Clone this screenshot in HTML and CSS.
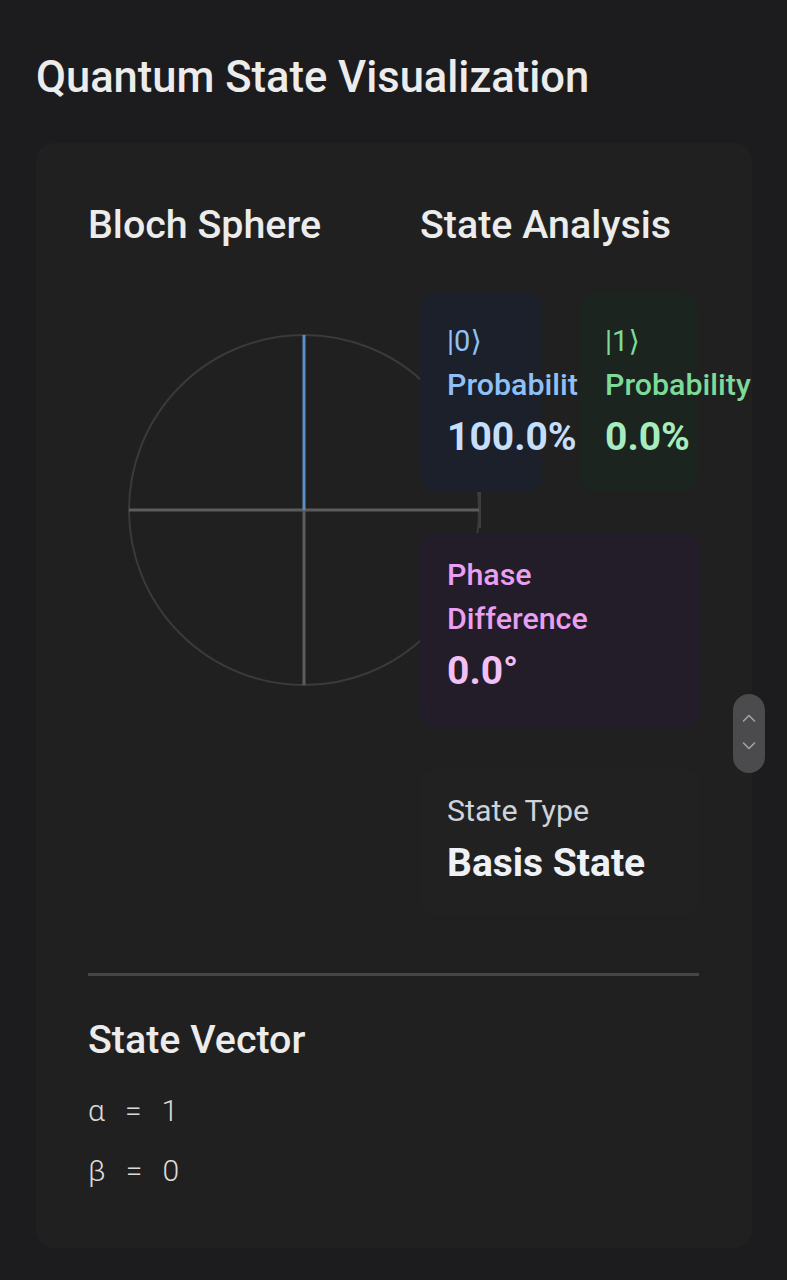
FILE: index.html
```html
<!DOCTYPE html>
<html lang="en">
<head>
<meta charset="utf-8">
<title>Quantum State Visualization</title>
<link rel="stylesheet" href="styles.css">
</head>
<body>
<main class="page">
  <h1 class="title">Quantum State Visualization</h1>
  <section class="panel">
    <div class="columns">
      <div class="col-left">
        <h2 class="heading">Bloch Sphere</h2>
        <div class="sphere-box">
          <svg class="sphere" width="436" height="436" viewBox="0 0 436 436">
            <circle cx="218" cy="217" r="175" fill="none" stroke="#3a3a3b" stroke-width="2"/>
            <line x1="43" y1="217" x2="394" y2="217" stroke="#5c5c5e" stroke-width="3"/>
            <line x1="394" y1="199" x2="394" y2="235" stroke="#3e3e40" stroke-width="2"/>
            <line x1="218" y1="217" x2="218" y2="392" stroke="#5c5c5e" stroke-width="3"/>
            <line x1="218" y1="42" x2="218" y2="217" stroke="#5b8fc6" stroke-width="3"/>
          </svg>
        </div>
      </div>
      <div class="col-right">
        <h2 class="heading">State Analysis</h2>
        <div class="prob-grid">
          <div class="stat stat-blue">
            <div class="ket">|0⟩</div>
            <div class="label clip">Probability</div>
            <div class="value">100.0%</div>
          </div>
          <div class="stat stat-green">
            <div class="ket">|1⟩</div>
            <div class="label">Probability</div>
            <div class="value">0.0%</div>
          </div>
        </div>
        <div class="stat stat-pink phase">
          <div class="label">Phase<br>Difference</div>
          <div class="value">0.0°</div>
        </div>
        <div class="stat stat-gray type">
          <div class="label">State Type</div>
          <div class="value">Basis State</div>
        </div>
      </div>
    </div>
    <hr class="divider">
    <h2 class="heading">State Vector</h2>
    <div class="vector">
      <div class="vec-row"><span>α</span><span>=</span><span>1</span></div>
      <div class="vec-row"><span>β</span><span>=</span><span>0</span></div>
    </div>
  </section>
  <div class="scroll-pill">
    <svg width="20" height="79" viewBox="0 0 20 79">
      <path d="M4.5 27 L10 21.5 L15.5 27" fill="none" stroke="#a2a2a4" stroke-width="1.6" stroke-linecap="round" stroke-linejoin="round"/>
      <path d="M4.5 49 L10 54.5 L15.5 49" fill="none" stroke="#a2a2a4" stroke-width="1.6" stroke-linecap="round" stroke-linejoin="round"/>
    </svg>
  </div>
</main>
</body>
</html>
```

FILE: styles.css
```css
* { box-sizing: border-box; }
html, body {
  margin: 0;
  padding: 0;
  background: #1c1c1e;
}
body {
  font-family: Roboto, "Noto Sans", "DejaVu Sans", sans-serif;
  color: #e8e8e8;
  height: 1280px;
  overflow: hidden;
}
.page {
  padding: 50px 35px 0 36px;
}
.title {
  margin: 0;
  font-size: 43.5px;
  font-weight: 500;
  line-height: 56px;
  color: #ececec;
}
.panel {
  margin-top: 37px;
  background: #202020;
  border-radius: 18px;
  padding: 54px 52px 60px 52px;
  height: 1105px;
}
.columns {
  display: grid;
  grid-template-columns: 312px 280px;
  column-gap: 20px;
}
.col-left { position: relative; }
.col-right { position: relative; z-index: 1; }
.heading {
  margin: 0;
  font-size: 39.4px;
  font-weight: 500;
  line-height: 56px;
  color: #ececec;
}
.sphere-box {
  margin-top: 40px;
  margin-left: -2px;
  width: 436px;
  height: 436px;
  border-radius: 8px;
  background: #202020;
}
.sphere { display: block; }
.prob-grid {
  margin-top: 40px;
  display: grid;
  grid-template-columns: 122px 118px;
  column-gap: 38px;
}
.stat {
  border-radius: 14px;
  padding: 26px 0 0 27px;
}
.stat-blue { background: #1b202a; height: 199px; color: #8fc0f8; }
.stat-green { background: #1b241e; height: 199px; color: #7ddb9a; padding-left: 25px; }
.stat-pink { background: #231d29; color: #eb9ff2; }
.stat-gray { background: #212122; }
.ket {
  font-size: 29px;
  line-height: 44px;
  white-space: nowrap;
}
.label {
  font-size: 30.4px;
  font-weight: 500;
  line-height: 44px;
  white-space: nowrap;
}
.label.clip {
  width: 131px;
  overflow: hidden;
}
.value {
  font-size: 39px;
  font-weight: 700;
  line-height: 60px;
  white-space: nowrap;
}
.stat-blue .value { color: #c5defc; }
.stat-green .value { color: #a6ecbf; }
.stat-pink .value { color: #f3c0f6; }
.phase {
  margin-top: 41px;
  height: 195px;
  padding-top: 20px;
}
.type {
  margin-top: 42px;
  height: 145px;
  padding-top: 19px;
}
.type .label { color: #cfd3da; font-weight: 400; }
.type .value { color: #eef1f6; }
.divider {
  margin: 58px 0 36px 0;
  border: 0;
  height: 3px;
  background: #464648;
  width: 611px;
}
.vector {
  margin-top: 13px;
  font-size: 30px;
  font-weight: 300;
  color: #dadada;
}
.vec-row {
  display: flex;
  gap: 20px;
  line-height: 60px;
}
.scroll-pill {
  position: absolute;
  left: 733px;
  top: 694px;
  width: 32px;
  height: 79px;
  border-radius: 16px;
  background: #4b4b4d;
  display: flex;
  align-items: center;
  justify-content: center;
}
```
